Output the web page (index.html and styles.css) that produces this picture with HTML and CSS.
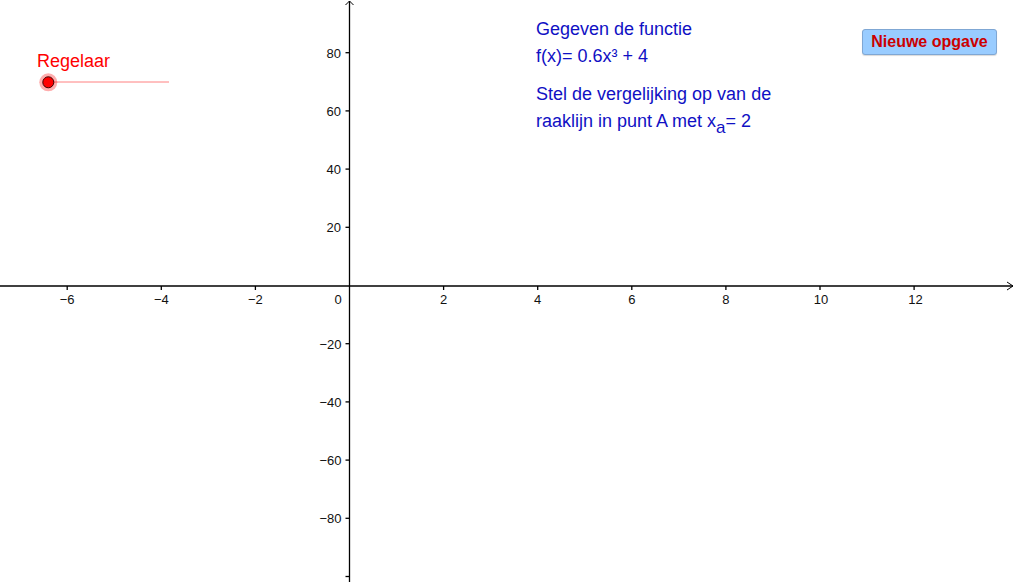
FILE: index.html
```html
<!DOCTYPE html>
<html lang="nl">
<head>
<meta charset="utf-8">
<title>Raaklijn</title>
<link rel="stylesheet" href="styles.css">
</head>
<body>
<div class="canvas">
  <svg class="graph" width="1016" height="582" viewBox="0 0 1016 582" xmlns="http://www.w3.org/2000/svg">
    <g class="axes">
      <line x1="0" y1="286" x2="1013" y2="286"/>
      <polyline class="arrow" points="1007,282 1013,286 1007,290"/>
      <line x1="349.5" y1="1" x2="349.5" y2="582"/>
      <polyline class="arrow" points="345.5,5 349.5,1 353.5,5"/>
      <!-- x ticks -->
      <line x1="67.2" y1="286" x2="67.2" y2="290"/>
      <line x1="161.3" y1="286" x2="161.3" y2="290"/>
      <line x1="255.4" y1="286" x2="255.4" y2="290"/>
      <line x1="443.6" y1="286" x2="443.6" y2="290"/>
      <line x1="537.7" y1="286" x2="537.7" y2="290"/>
      <line x1="631.8" y1="286" x2="631.8" y2="290"/>
      <line x1="725.9" y1="286" x2="725.9" y2="290"/>
      <line x1="820" y1="286" x2="820" y2="290"/>
      <line x1="914.1" y1="286" x2="914.1" y2="290"/>
      <!-- y ticks -->
      <line x1="345.5" y1="52.7" x2="349.5" y2="52.7"/>
      <line x1="345.5" y1="110.9" x2="349.5" y2="110.9"/>
      <line x1="345.5" y1="169.1" x2="349.5" y2="169.1"/>
      <line x1="345.5" y1="227.3" x2="349.5" y2="227.3"/>
      <line x1="345.5" y1="343.7" x2="349.5" y2="343.7"/>
      <line x1="345.5" y1="401.9" x2="349.5" y2="401.9"/>
      <line x1="345.5" y1="460.1" x2="349.5" y2="460.1"/>
      <line x1="345.5" y1="518.3" x2="349.5" y2="518.3"/>
      <line x1="345.5" y1="576.5" x2="349.5" y2="576.5"/>
    </g>
    <g class="xlabels">
      <text x="67.2" y="304">−6</text>
      <text x="161.3" y="304">−4</text>
      <text x="255.4" y="304">−2</text>
      <text x="338" y="304">0</text>
      <text x="443.6" y="304">2</text>
      <text x="537.7" y="304">4</text>
      <text x="631.8" y="304">6</text>
      <text x="725.9" y="304">8</text>
      <text x="821" y="304">10</text>
      <text x="915.5" y="304">12</text>
    </g>
    <g class="ylabels">
      <text x="341" y="57.7">80</text>
      <text x="341" y="115.9">60</text>
      <text x="341" y="174.1">40</text>
      <text x="341" y="232.3">20</text>
      <text x="341.5" y="348.7">−20</text>
      <text x="341.5" y="406.9">−40</text>
      <text x="341.5" y="465.1">−60</text>
      <text x="341.5" y="523.3">−80</text>
    </g>
    <g class="slider">
      <text class="slider-label" x="37" y="67">Regelaar</text>
      <line class="slider-track" x1="48" y1="82" x2="169" y2="82"/>
      <circle class="slider-halo" cx="48.3" cy="82.3" r="9"/>
      <circle class="slider-point" cx="48.3" cy="82.3" r="5.5"/>
    </g>
  </svg>

  <div class="task task-function">
    <div>Gegeven de functie</div>
    <div>f(x)= 0.6x³ + 4</div>
  </div>
  <div class="task task-question">
    <div>Stel de vergelijking op van de</div>
    <div>raaklijn in punt A met x<span class="sub">a</span>= 2</div>
  </div>

  <div class="new-task-button">Nieuwe opgave</div>
</div>
</body>
</html>
```
FILE: styles.css
```css
html, body {
  margin: 0;
  padding: 0;
  background: #ffffff;
}

.canvas {
  position: relative;
  width: 1016px;
  height: 582px;
  overflow: hidden;
  background: #ffffff;
  font-family: "Liberation Sans", Arial, sans-serif;
}

.graph {
  position: absolute;
  left: 0;
  top: 0;
  display: block;
}

.axes line,
.axes polyline {
  stroke: #000000;
  stroke-width: 1.3;
  fill: none;
}

.axes .arrow {
  stroke-width: 1;
}

.xlabels text,
.ylabels text {
  font-family: "Liberation Sans", Arial, sans-serif;
  font-size: 13px;
  fill: #111111;
}

.xlabels text {
  text-anchor: middle;
}

.ylabels text {
  text-anchor: end;
}

.slider-label {
  font-family: "Liberation Sans", Arial, sans-serif;
  font-size: 18px;
  fill: #ff0000;
}

.slider-track {
  stroke: #ff8080;
  stroke-width: 1;
}

.slider-halo {
  fill: rgba(255, 0, 0, 0.32);
}

.slider-point {
  fill: #ff0000;
  stroke: #3a0000;
  stroke-width: 1;
}

.task {
  position: absolute;
  left: 536px;
  font-size: 18px;
  line-height: 26.7px;
  color: #1010c4;
  white-space: nowrap;
}

.task-function {
  top: 16.4px;
}

.task-question {
  top: 81.3px;
}

.sub {
  font-size: 17px;
  line-height: 0;
  vertical-align: -6px;
}

.new-task-button {
  position: absolute;
  left: 862px;
  top: 29px;
  width: 133px;
  height: 24px;
  border: 1px solid #7fa7d4;
  border-radius: 3px;
  background: #99ccff;
  color: #cc0000;
  font-weight: bold;
  font-size: 16px;
  line-height: 24px;
  text-align: center;
  box-shadow: 0 1px 1px rgba(0, 0, 0, 0.15);
}
```
